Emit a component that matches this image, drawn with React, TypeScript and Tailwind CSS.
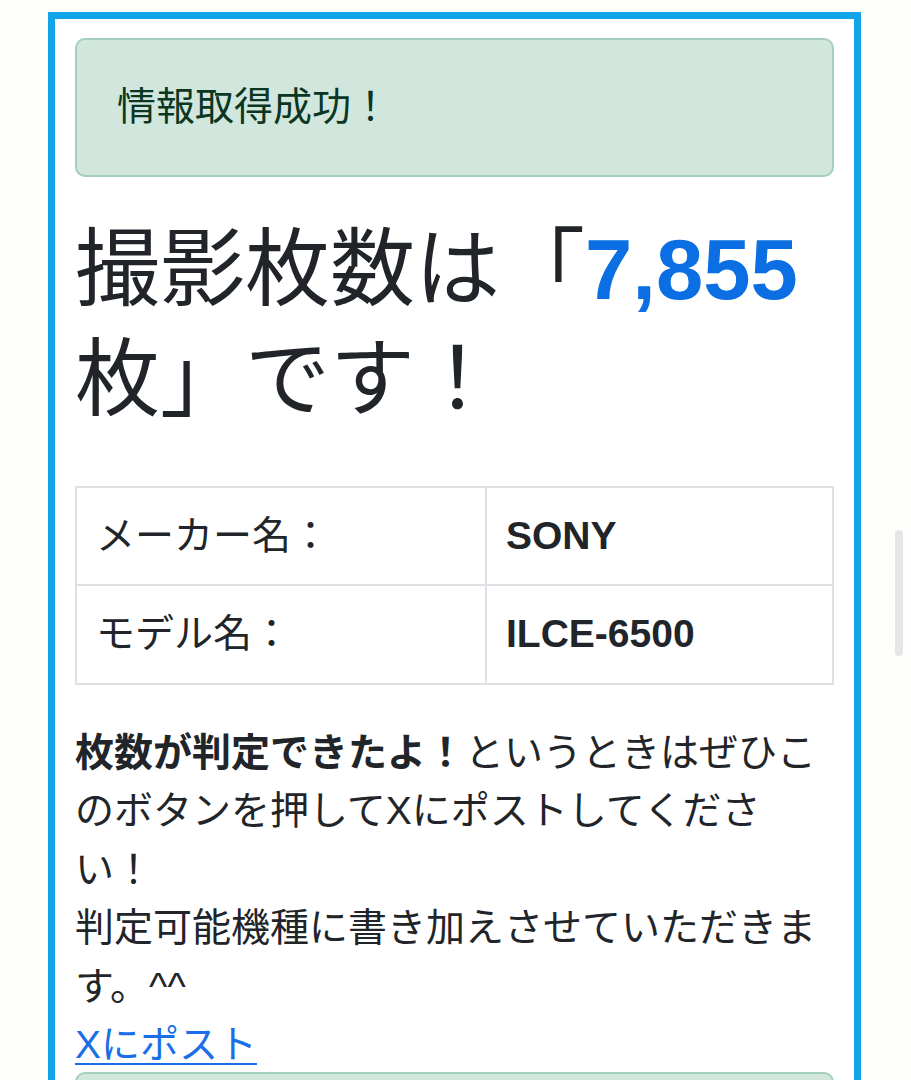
import React from "react";

const FONT = '"Liberation Sans", "Noto Sans CJK JP", sans-serif';

export default function App() {
  return (
    <div
      className="relative h-[1080px] overflow-hidden bg-[#fefefd] text-[#212529]"
      style={{ fontFamily: FONT }}
    >
      <div className="ml-[48px] mt-[12px] w-[813px] border-[7px] border-[#13a3e8] bg-white px-[20px] pt-[19px] pb-[60px]">
        <div className="rounded-[10px] border-2 border-[#a3cfbb] bg-[#d1e7dd] px-[40px] py-[38px] text-[39px] leading-[1.5] text-[#0a3622]">
          情報取得成功！
        </div>

        <h1 className="mt-[38px] text-[85px] font-normal leading-[110px] text-[#212529]">
          撮影枚数は「<span className="font-bold text-[#0b6fe3]">7,855</span>
          <br />
          枚」です！
        </h1>

        <table className="mt-[51px] w-full border-collapse text-[39px] leading-[1.5]">
          <tbody>
            <tr>
              <td className="w-[410px] border-2 border-[#dee2e6] px-[19px] py-[19px] align-middle">
                メーカー名：
              </td>
              <td className="border-2 border-[#dee2e6] px-[19px] py-[19px] font-bold align-middle">
                SONY
              </td>
            </tr>
            <tr>
              <td className="w-[410px] border-2 border-[#dee2e6] px-[19px] py-[19px] align-middle">
                モデル名：
              </td>
              <td className="border-2 border-[#dee2e6] px-[19px] py-[19px] font-bold align-middle">
                ILCE-6500
              </td>
            </tr>
          </tbody>
        </table>

        <p className="mt-[39px] text-[39px] leading-[1.5]">
          <strong className="font-bold">枚数が判定できたよ！</strong>というときはぜひこ
          <br />
          のボタンを押してXにポストしてくださ
          <br />
          い！
          <br />
          判定可能機種に書き加えさせていただきま
          <br />
          す。^^
        </p>
        <p className="text-[39px] leading-[1.5]">
          <a href="#" className="text-[#1a6fe8] underline decoration-2 underline-offset-[5px]">
            Xにポスト
          </a>
        </p>

        <div className="mt-[-3px] h-[140px] rounded-[10px] border-2 border-[#a3cfbb] bg-[#d1e7dd]" />
      </div>

      <div className="absolute left-[895px] top-[530px] h-[126px] w-[8px] rounded-full bg-[#e6e6e6]" />
    </div>
  );
}
